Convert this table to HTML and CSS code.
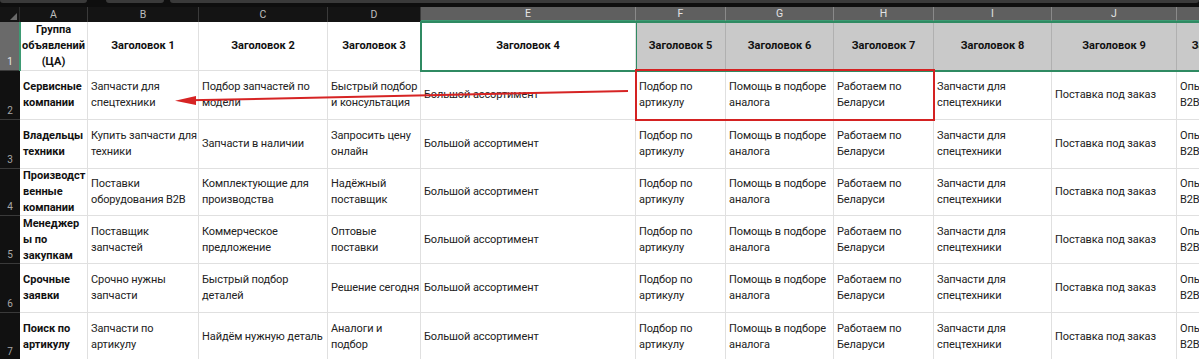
FILE: index.html
```html
<!DOCTYPE html>
<html lang="ru">
<head>
<meta charset="utf-8">
<title>Таблица</title>
<link rel="stylesheet" href="styles.css">
</head>
<body>
<div class="page">
  <div class="topbar">
    <div class="tab t1"></div>
    <div class="tab t2"></div>
    <div class="tab t3"></div>
  </div>
  <div class="sheet">
    <div class="corner"><span class="tri"></span></div>
    <div class="ch">A</div>
    <div class="ch">B</div>
    <div class="ch">C</div>
    <div class="ch">D</div>
    <div class="ch sel">E</div>
    <div class="ch sel">F</div>
    <div class="ch sel">G</div>
    <div class="ch sel">H</div>
    <div class="ch sel">I</div>
    <div class="ch sel">J</div>
    <div class="ch sel">K</div>

    <div class="rh rsel">1</div>
    <div class="c hd center">Группа<br>объявлений<br>(ЦА)</div>
    <div class="c hd center">Заголовок 1</div>
    <div class="c hd center">Заголовок 2</div>
    <div class="c hd center">Заголовок 3</div>
    <div class="c hd center active">Заголовок 4</div>
    <div class="c hd center gray">Заголовок 5</div>
    <div class="c hd center gray">Заголовок 6</div>
    <div class="c hd center gray">Заголовок 7</div>
    <div class="c hd center gray">Заголовок 8</div>
    <div class="c hd center gray">Заголовок 9</div>
    <div class="c hd center gray">Заголовок 10</div>

    <div class="rh">2</div>
    <div class="c hd">Сервисные<br>компании</div>
    <div class="c">Запчасти для<br>спецтехники</div>
    <div class="c">Подбор запчастей по<br>модели</div>
    <div class="c">Быстрый подбор<br>и консультация</div>
    <div class="c">Большой ассортимент</div>
    <div class="c">Подбор по<br>артикулу</div>
    <div class="c">Помощь в подборе<br>аналога</div>
    <div class="c">Работаем по<br>Беларуси</div>
    <div class="c">Запчасти для<br>спецтехники</div>
    <div class="c">Поставка под заказ</div>
    <div class="c">Опыт работы<br>B2B</div>

    <div class="rh">3</div>
    <div class="c hd">Владельцы<br>техники</div>
    <div class="c">Купить запчасти для<br>техники</div>
    <div class="c">Запчасти в наличии</div>
    <div class="c">Запросить цену<br>онлайн</div>
    <div class="c">Большой ассортимент</div>
    <div class="c">Подбор по<br>артикулу</div>
    <div class="c">Помощь в подборе<br>аналога</div>
    <div class="c">Работаем по<br>Беларуси</div>
    <div class="c">Запчасти для<br>спецтехники</div>
    <div class="c">Поставка под заказ</div>
    <div class="c">Опыт работы<br>B2B</div>

    <div class="rh">4</div>
    <div class="c hd">Производст<br>венные<br>компании</div>
    <div class="c">Поставки<br>оборудования B2B</div>
    <div class="c">Комплектующие для<br>производства</div>
    <div class="c">Надёжный<br>поставщик</div>
    <div class="c">Большой ассортимент</div>
    <div class="c">Подбор по<br>артикулу</div>
    <div class="c">Помощь в подборе<br>аналога</div>
    <div class="c">Работаем по<br>Беларуси</div>
    <div class="c">Запчасти для<br>спецтехники</div>
    <div class="c">Поставка под заказ</div>
    <div class="c">Опыт работы<br>B2B</div>

    <div class="rh">5</div>
    <div class="c hd">Менеджер<br>ы по<br>закупкам</div>
    <div class="c">Поставщик<br>запчастей</div>
    <div class="c">Коммерческое<br>предложение</div>
    <div class="c">Оптовые<br>поставки</div>
    <div class="c">Большой ассортимент</div>
    <div class="c">Подбор по<br>артикулу</div>
    <div class="c">Помощь в подборе<br>аналога</div>
    <div class="c">Работаем по<br>Беларуси</div>
    <div class="c">Запчасти для<br>спецтехники</div>
    <div class="c">Поставка под заказ</div>
    <div class="c">Опыт работы<br>B2B</div>

    <div class="rh">6</div>
    <div class="c hd">Срочные<br>заявки</div>
    <div class="c">Срочно нужны<br>запчасти</div>
    <div class="c">Быстрый подбор<br>деталей</div>
    <div class="c">Решение сегодня</div>
    <div class="c">Большой ассортимент</div>
    <div class="c">Подбор по<br>артикулу</div>
    <div class="c">Помощь в подборе<br>аналога</div>
    <div class="c">Работаем по<br>Беларуси</div>
    <div class="c">Запчасти для<br>спецтехники</div>
    <div class="c">Поставка под заказ</div>
    <div class="c">Опыт работы<br>B2B</div>

    <div class="rh">7</div>
    <div class="c hd">Поиск по<br>артикулу</div>
    <div class="c">Запчасти по<br>артикулу</div>
    <div class="c">Найдём нужную деталь</div>
    <div class="c">Аналоги и<br>подбор</div>
    <div class="c">Большой ассортимент</div>
    <div class="c">Подбор по<br>артикулу</div>
    <div class="c">Помощь в подборе<br>аналога</div>
    <div class="c">Работаем по<br>Беларуси</div>
    <div class="c">Запчасти для<br>спецтехники</div>
    <div class="c">Поставка под заказ</div>
    <div class="c">Опыт работы<br>B2B</div>
  </div>

  <div class="rowmark"></div>
  <div class="selection"></div>
  <div class="redbox"></div>
  <svg class="arrow" width="1199" height="359" viewBox="0 0 1199 359">
    <line x1="628" y1="91" x2="190" y2="100.3" stroke="#d62424" stroke-width="2"/>
    <polygon points="175,100.7 196,96 196,105" fill="#d62424"/>
  </svg>
</div>
</body>
</html>
```

FILE: styles.css
```css
html, body {
  margin: 0;
  padding: 0;
  background: #0e0e0e;
  overflow: hidden;
}
body {
  width: 1199px;
  height: 359px;
  font-family: Roboto, "Noto Sans", "Liberation Sans", sans-serif;
}
.page {
  position: relative;
  width: 1199px;
  height: 359px;
  overflow: hidden;
}
.topbar {
  height: 7px;
  display: flex;
  background: #0e0e0e;
}
.tab {
  height: 3px;
  background: #3a3a3a;
  border-radius: 0 0 3px 3px;
}
.t1 { width: 87px; }
.t2 { width: 58px; margin-left: 19px; }
.t3 { flex: 1; margin-left: 6px; }

.sheet {
  display: grid;
  grid-template-columns: 20px 68px 111px 129px 93px 215px 90px 108px 100px 118px 125px 100px;
  grid-template-rows: 15px 49px 49px 49px 47px 48px 49px 48px;
  width: 1277px;
  background: #ffffff;
}
.corner {
  background: #141414;
  position: relative;
  border-right: 1px solid #2c2c2c;
}
.tri {
  position: absolute;
  right: 2px;
  bottom: 2px;
  width: 0;
  height: 0;
  border-left: 7px solid transparent;
  border-bottom: 7px solid #6a6a6a;
}
.ch {
  background: #141414;
  color: #bdbdbd;
  font-size: 10.5px;
  display: flex;
  align-items: center;
  justify-content: center;
  border-right: 1px solid #3a3a3a;
  box-sizing: border-box;
}
.ch.sel {
  background: #5f5f5f;
  color: #e4e4e4;
  border-right-color: #8a8a8a;
  border-bottom: 2px solid #3d9a73;
}
.rh {
  background: #111111;
  color: #a8a8a8;
  font-size: 10px;
  display: flex;
  align-items: flex-end;
  justify-content: center;
  padding-bottom: 3px;
  box-sizing: border-box;
  border-bottom: 1px solid #3a3a3a;
}
.rh.rsel {
  background: #6a6a6a;
  color: #e6e6e6;
}
.c {
  box-sizing: border-box;
  border-right: 1px solid #e0e0e0;
  border-bottom: 1px solid #e0e0e0;
  display: flex;
  align-items: center;
  padding: 0 3px;
  font-size: 11px;
  line-height: 16px;
  letter-spacing: -0.1px;
  color: #222222;
  white-space: nowrap;
  overflow: visible;
  background: #ffffff;
}
.c.hd {
  font-weight: 700;
  font-size: 11px;
  letter-spacing: 0;
  color: #111111;
}
.c.center {
  justify-content: center;
  text-align: center;
}
.c.gray {
  background: #c9c9c9;
  border-right-color: #b0b0b0;
  border-bottom-color: #c9c9c9;
}
.c.active {
  background: #ffffff;
}

.rowmark {
  position: absolute;
  left: 19px;
  top: 22px;
  width: 2px;
  height: 49px;
  background: #3d9a73;
}
.selection {
  position: absolute;
  left: 420px;
  top: 21px;
  width: 900px;
  height: 51px;
  box-sizing: border-box;
  border: 2px solid #2f8a62;
  border-right: none;
}
.selection::after {
  content: "";
  position: absolute;
  left: 214px;
  top: 0;
  bottom: 0;
  width: 0;
  border-right: 1px solid #2f8a62;
}
.redbox {
  position: absolute;
  left: 635px;
  top: 69px;
  width: 300px;
  height: 52px;
  box-sizing: border-box;
  border: 2.5px solid #d42222;
}
.arrow {
  position: absolute;
  left: 0;
  top: 0;
  pointer-events: none;
}
```
